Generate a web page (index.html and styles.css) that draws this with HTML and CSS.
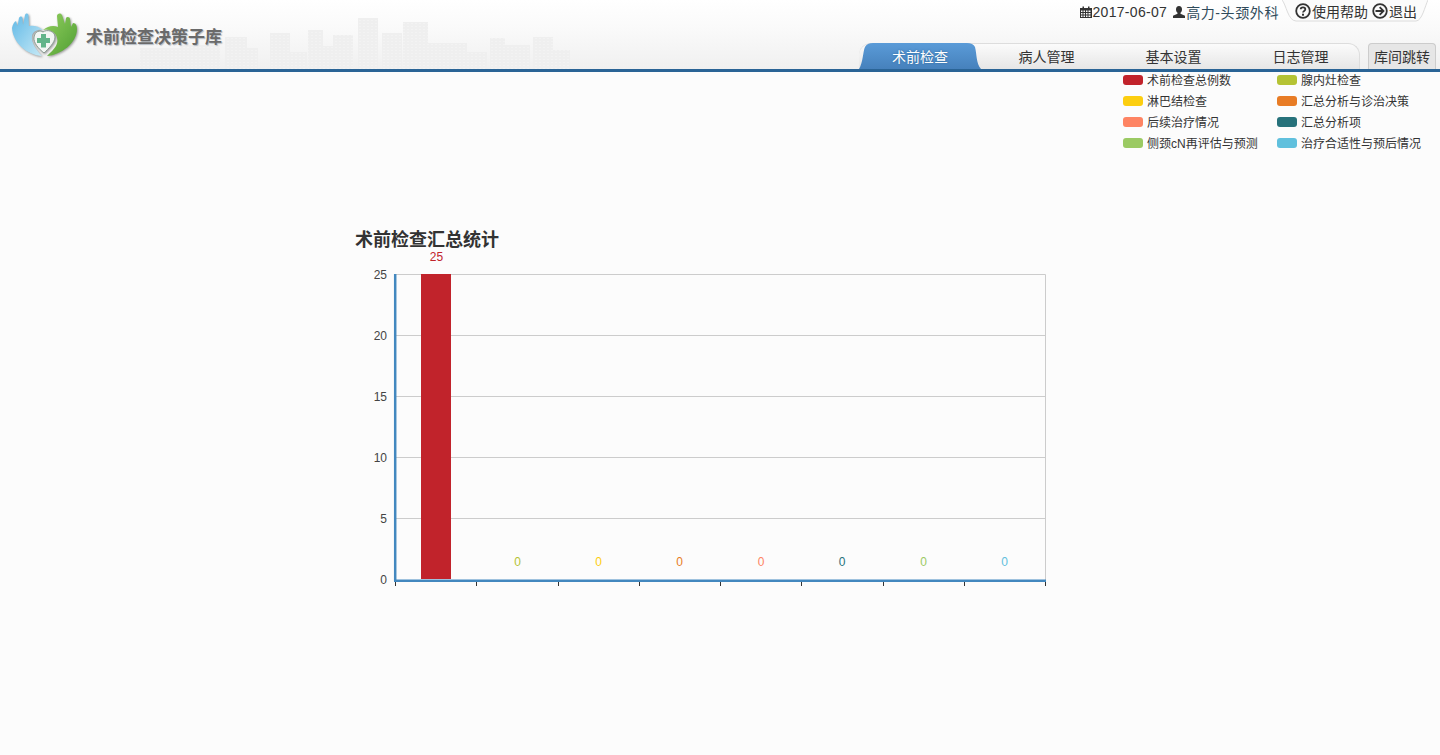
FILE: index.html
```html
<!DOCTYPE html>
<html lang="en">
<head>
    <meta charset="UTF-8">
    <meta name="viewport" content="width=device-width, initial-scale=1.0">
    <title>术前检查决策子库</title>
    <link rel="stylesheet" href="styles.css">
</head>
<body>

    <header class="top">
        <svg class="skyline" viewBox="0 0 450 59" width="450" height="59">
            <defs>
                <pattern id="windows" width="4" height="3" patternUnits="userSpaceOnUse">
                    <rect width="4" height="3" fill="#efefef"/>
                    <rect x="1" y="1" width="2" height="1" fill="#f3f3f3"/>
                </pattern>
            </defs>
            <g fill="url(#windows)">
                <rect x="10" y="38" width="40" height="21"/>
                <rect x="50" y="35" width="40" height="24"/>
                <rect x="95" y="27" width="22" height="32"/>
                <rect x="113" y="38" width="15" height="21"/>
                <rect x="140" y="23" width="20" height="36"/>
                <rect x="157" y="42" width="20" height="17"/>
                <rect x="178" y="20" width="15" height="39"/>
                <rect x="193" y="36" width="10" height="23"/>
                <rect x="203" y="25" width="20" height="34"/>
                <rect x="228" y="8" width="20" height="51"/>
                <rect x="252" y="23" width="20" height="36"/>
                <rect x="273" y="12" width="25" height="47"/>
                <rect x="298" y="33" width="39" height="26"/>
                <rect x="337" y="42" width="20" height="17"/>
                <rect x="360" y="28" width="15" height="31"/>
                <rect x="375" y="35" width="25" height="24"/>
                <rect x="403" y="27" width="20" height="32"/>
                <rect x="423" y="40" width="17" height="19"/>
            </g>
        </svg>
        <div class="brand">
            <svg class="logo" viewBox="0 0 68 44" width="68" height="44">
                <defs>
                    <linearGradient id="handBlue" x1="0" y1="0" x2="1" y2="1">
                        <stop offset="0" stop-color="#5fb8e6"/>
                        <stop offset="1" stop-color="#c8eaf6"/>
                    </linearGradient>
                    <linearGradient id="handGreen" x1="0" y1="0" x2="1" y2="1">
                        <stop offset="0" stop-color="#93d05e"/>
                        <stop offset="1" stop-color="#4f9e34"/>
                    </linearGradient>
                </defs>
                <path fill="#f2f6f4" stroke="#8a9a92" d="M32 19C36 16 44 18 44 24C44 30 37 36 33 40C28 36 22 30 23 24C24 18 29 17 32 19Z"/>
                <path fill="url(#handBlue)" d="M1 15C2 11 3 9 5 8L6.500 13L8 5C9 3 11 3 11.500 5L12 12L14 2C15 0 17.500 0 17.500 3L18 13C22 12 28 13 32 17C27 16 22 18 21 23C20 30 26 38 31 43C16 42 2 30 1 15Z"/>
                <path fill="url(#handGreen)" d="M32 17C37 13 42 12 47 14L46 3C46 0 50 -0.500 51 2L54 11L55 5C56 3 59 4 59 6L60 14L62 10C65 10 66 13 66 16C66 30 50 42 36 43C42 37 48 32 46 25C45 19 38 15 32 17Z"/>
                <path fill="#62b48a" d="M30 21H35V25H39V30H35V34.500H30V30H26V25H30Z"/>
            </svg>
            <span class="brand-name">术前检查决策子库</span>
        </div>
        <div class="top-right">
            <div class="info-row">
                <span class="info-item">
                    <svg viewBox="0 0 12 12" width="12" height="12"><path fill="#333" d="M0 2H2.500V0.500H4V2H8V0.500H9.500V2H12V12H0ZM1 4.500V6H2.500V4.500ZM3.500 4.500V6H5V4.500ZM6 4.500V6H7.500V4.500ZM8.500 4.500V6H10.500V4.500ZM1 7V8.500H2.500V7ZM3.500 7V8.500H5V7ZM6 7V8.500H7.500V7ZM8.500 7V8.500H10.500V7ZM1 9.500V11H2.500V9.500ZM3.500 9.500V11H5V9.500ZM6 9.500V11H7.500V9.500ZM8.500 9.500V11H10.500V9.500Z"/></svg>
                    2017-06-07
                </span>
                <span class="info-item user">
                    <svg viewBox="0 0 12 12" width="12" height="12"><path fill="#333" d="M6 0C8 0 9 1.500 9 3.500C9 5 8.300 6.200 7.500 6.800V7.800L12 9.800V12H0V9.800L4.500 7.800V6.800C3.700 6.200 3 5 3 3.500C3 1.500 4 0 6 0Z"/></svg>
                    高力-头颈外科
                </span>
                <div class="help-box">
                    <svg class="help-bg" viewBox="0 0 146 22" preserveAspectRatio="none"><path fill="#fbfbfb" stroke="#dcdcdc" d="M0 0C4 4 6 21 14 21H134C140 21 143 6 146 0"/></svg>
                    <span class="help-link">
                        <svg viewBox="0 0 16 16" width="16" height="16"><circle cx="8" cy="8" r="6.800" fill="none" stroke="#333" stroke-width="1.800"/><path fill="none" stroke="#333" stroke-width="1.800" d="M5.700 6.300C5.700 3.800 10.300 3.800 10.300 6.300C10.300 8 8 7.800 8 9.600"/><rect x="7" y="10.700" width="2" height="2" fill="#333"/></svg>
                        使用帮助
                    </span>
                    <span class="help-link">
                        <svg viewBox="0 0 16 16" width="16" height="16"><circle cx="8" cy="8" r="6.800" fill="none" stroke="#333" stroke-width="1.800"/><path fill="#333" d="M8.300 3.500L12.800 8L8.300 12.500L7 11.200L9.200 9H3.500V7H9.200L7 4.800Z"/></svg>
                        退出
                    </span>
                </div>
            </div>
            <div class="nav-row">
                <nav class="tabs">
                    <a class="tab active">术前检查</a>
                    <a class="tab">病人管理</a>
                    <a class="tab">基本设置</a>
                    <a class="tab">日志管理</a>
                </nav>
                <a class="jump">库间跳转</a>
            </div>
        </div>
    </header>

    <main>
        <ul class="legend">
            <li><i class="swatch c1"></i>术前检查总例数</li>
            <li><i class="swatch c2"></i>腺内灶检查</li>
            <li><i class="swatch c3"></i>淋巴结检查</li>
            <li><i class="swatch c4"></i>汇总分析与诊治决策</li>
            <li><i class="swatch c5"></i>后续治疗情况</li>
            <li><i class="swatch c6"></i>汇总分析项</li>
            <li><i class="swatch c7"></i>侧颈cN再评估与预测</li>
            <li><i class="swatch c8"></i>治疗合适性与预后情况</li>
        </ul>

        <section class="chart">
            <h2>术前检查汇总统计</h2>
            <svg class="chart-svg" viewBox="355 250 700 340" width="700" height="340">
                <!-- grid -->
                <g stroke="#ccc" stroke-width="1" fill="none">
                    <path d="M395 274.500H1045.500V580"/>
                    <path d="M395 335.500H1045"/>
                    <path d="M395 396.500H1045"/>
                    <path d="M395 457.500H1045"/>
                    <path d="M395 518.500H1045"/>
                </g>
                <rect x="421" y="274" width="30" height="305" fill="#c1232b"/>
                <path d="M395.200 274V581" stroke="#4388bf" stroke-width="2.500"/>
                <path d="M394 580.800H1046" stroke="#4388bf" stroke-width="2.500"/>
                <g stroke="#333" stroke-width="1">
                    <path d="M395.500 582V586M476.500 582V586M558.500 582V586M639.500 582V586M720.500 582V586M801.500 582V586M883.500 582V586M964.500 582V586M1045.500 582V586"/>
                </g>
                <g class="y-labels" text-anchor="end">
                    <text x="387" y="279">25</text>
                    <text x="387" y="340">20</text>
                    <text x="387" y="401">15</text>
                    <text x="387" y="462">10</text>
                    <text x="387" y="523">5</text>
                    <text x="387" y="584">0</text>
                </g>
                <g class="bar-labels" text-anchor="middle">
                    <text x="436.500" y="261" fill="#c1232b">25</text>
                    <text x="517.500" y="566" fill="#b5c334">0</text>
                    <text x="598.500" y="566" fill="#fcce10">0</text>
                    <text x="679.500" y="566" fill="#e87c25">0</text>
                    <text x="761" y="566" fill="#fe8463">0</text>
                    <text x="842" y="566" fill="#27727b">0</text>
                    <text x="923.500" y="566" fill="#9bca63">0</text>
                    <text x="1004.500" y="566" fill="#60c0dd">0</text>
                </g>
            </svg>
        </section>
    </main>

</body>
</html>
```

FILE: styles.css
```css
* {
    box-sizing: border-box;
}
body {
    margin: 0;
    height: 755px;
    overflow: hidden;
    background: #fcfcfc;
    color: #333;
    font-family: "Liberation Sans", "Noto Sans CJK SC", sans-serif;
    font-size: 14px;
}
.top {
    position: relative;
    display: flex;
    justify-content: space-between;
    height: 72px;
    border-bottom: 3px solid #2a6496;
    background: linear-gradient(#fff, #fafafa 40%, #f0f0f0);
}
.skyline {
    position: absolute;
    left: 130px;
    bottom: 0;
}
.brand {
    position: relative;
    display: flex;
    align-items: flex-start;
    padding: 13px 0 0 11px;
}
.logo {
    display: block;
    filter: drop-shadow(1px 1px 1px #999);
}
.brand-name {
    margin: 15px 0 0 7px;
    color: #6a6a6a;
    font-size: 17px;
    font-weight: bold;
    line-height: 20px;
    text-shadow: 1px 1px 1px #b4bcc4;
}
.top-right {
    position: relative;
    display: flex;
    flex-direction: column;
    align-items: flex-end;
    justify-content: space-between;
    padding-right: 4px;
}
.info-row {
    display: flex;
    align-items: flex-start;
    height: 22px;
    padding-right: 8px;
}
.info-item {
    display: flex;
    align-items: center;
    gap: 1px;
    height: 24px;
    margin-right: 6px;
    letter-spacing: 0.3px;
    white-space: nowrap;
}
.info-item.user {
    margin-right: 3px;
    color: #2f4a5a;
    letter-spacing: 0.6px;
}
.help-box {
    position: relative;
    display: flex;
    align-items: center;
    gap: 4px;
    width: 146px;
    height: 22px;
    padding-left: 13px;
}
.help-bg {
    position: absolute;
    left: 0;
    top: 0;
    width: 100%;
    height: 100%;
}
.help-link {
    position: relative;
    display: flex;
    align-items: center;
    gap: 1px;
    white-space: nowrap;
}
.nav-row {
    display: flex;
    align-items: flex-end;
    gap: 8px;
}
.tabs {
    display: flex;
    width: 501px;
    height: 26px;
    border-top: 1px solid #ddd;
    border-top-left-radius: 12px;
    border-top-right-radius: 12px;
    border-right: 1px solid #ddd;
    background: linear-gradient(#fbfbfb, #e6e6e6);
}
.tab {
    flex: none;
    width: 127px;
    color: #333;
    font-size: 14px;
    line-height: 27px;
    text-align: center;
}
.tab.active {
    width: 122px;
    height: 26px;
    margin: -1px 2px 0 0;
    color: #fff;
    line-height: 28px;
    text-shadow: 0 0 2px #2a6496;
    background: linear-gradient(#5a9bd8, #4681bc);
    clip-path: path("M0 26C4 20 4 8 6 4Q8 0 14 0H108Q114 0 116 4C118 12 117 20 122 26Z");
}
.jump {
    width: 68px;
    height: 26px;
    border: 1px solid #ccc;
    border-bottom: none;
    border-radius: 4px 4px 0 0;
    background: #e6e6e6;
    font-size: 14px;
    line-height: 27px;
    text-align: center;
}
main {
    display: flex;
    flex-direction: column;
}
.legend {
    display: grid;
    grid-template-columns: 154px 144px;
    grid-auto-rows: 21px;
    align-self: flex-end;
    height: 84px;
    margin: 0;
    padding: 0 19px 0 0;
    list-style: none;
    font-size: 12px;
}
.legend li {
    display: flex;
    align-items: center;
    gap: 4px;
    height: 15px;
    white-space: nowrap;
}
.swatch {
    width: 20px;
    height: 10px;
    border-radius: 3px;
}
.c1 { background: #c1232b; }
.c2 { background: #b5c334; }
.c3 { background: #fcce10; }
.c4 { background: #e87c25; }
.c5 { background: #fe8463; }
.c6 { background: #27727b; }
.c7 { background: #9bca63; }
.c8 { background: #60c0dd; }
.chart {
    padding: 73px 0 0 355px;
}
.chart h2 {
    margin: 0;
    height: 21px;
    font-size: 18px;
    line-height: 22px;
    font-weight: bold;
    white-space: nowrap;
}
.chart-svg {
    display: block;
}
.chart-svg text {
    font-size: 12px;
}
.y-labels {
    fill: #444;
}
```
